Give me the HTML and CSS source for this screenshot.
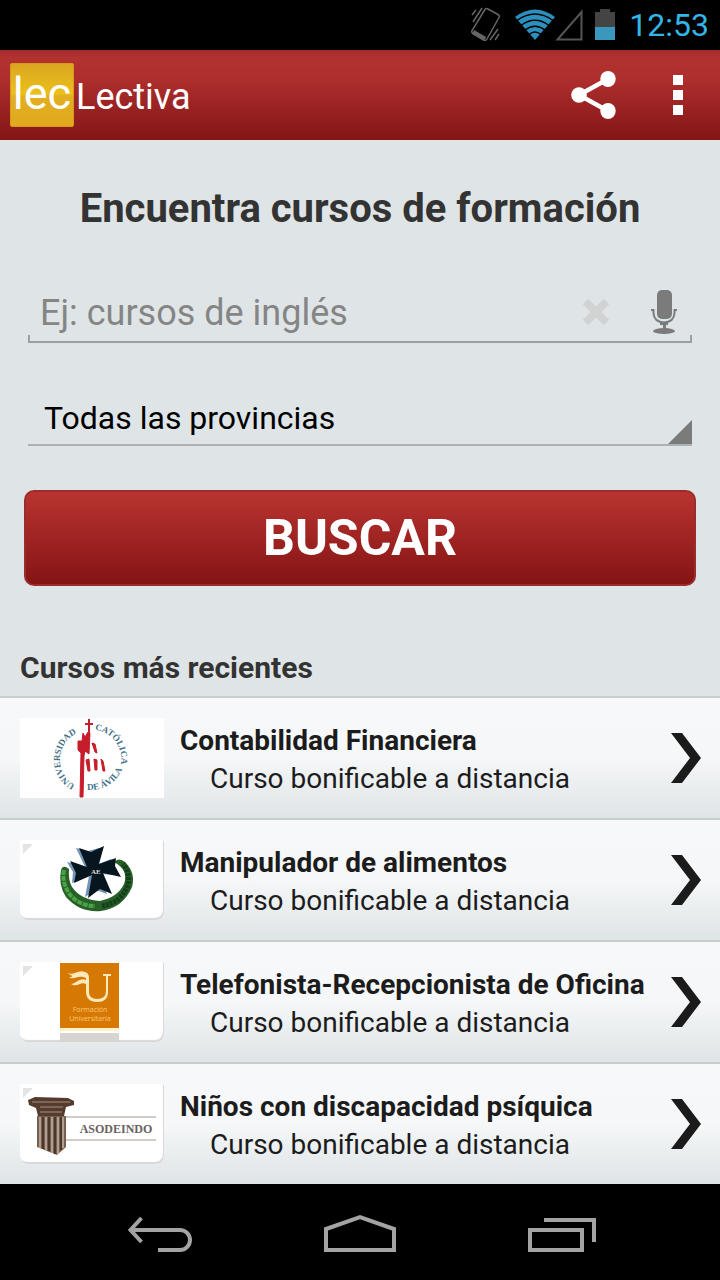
FILE: index.html
```html
<!DOCTYPE html>
<html lang="es">
<head>
<meta charset="utf-8">
<meta name="viewport" content="width=device-width, initial-scale=1">
<title>Lectiva</title>
<link rel="stylesheet" href="styles.css">
</head>
<body>
<div class="status">
  <svg class="status-vibrate" width="30" height="36" viewBox="0 0 30 36" fill="none" stroke="#666" stroke-width="1.5" aria-hidden="true">
    <path d="M14 2.5Q15 1 17 2L27 7.500Q29 8.500 28 10.500L16 32Q15 34 13 33L3 27Q0 26 1 23.500Z"/>
    <path d="M2 25L14 32" stroke-width="4.500"/>
    <path d="M2 15L11 1M1 8L5 3M19 33L27 22M24 33L28 27"/>
  </svg>
  <svg class="status-wifi" width="40" height="32" viewBox="0 0 40 32" aria-hidden="true">
    <path d="M20 31L0 8Q20-7 40 8Z" fill="#2b90bd"/>
    <path d="M2 11.500Q20-1.500 38 11.500M6 16.500Q20 6 34 16.500M10 21Q20 13.500 30 21M14 25.500Q20 20.500 26 25.500" fill="none" stroke="#000" stroke-width="1.500"/>
  </svg>
  <svg class="status-signal" width="28" height="32" viewBox="0 0 28 32" fill="none" stroke="#555" stroke-width="2" aria-hidden="true"><path d="M2.500 30.500H26.500V3Z"/></svg>
  <svg class="status-battery" width="20" height="32" viewBox="0 0 20 32" aria-hidden="true"><path d="M0 3H5V0H15V3H20V31H0Z" fill="#444"/><path d="M0 18H20V31H0Z" fill="#3a98bd"/></svg>
  <time class="clock">12:53</time>
</div>
<header class="appbar">
  <span class="logo" aria-hidden="true">lec</span>
  <span class="app-name">Lectiva</span>
  <button class="bar-button share" type="button" aria-label="Compartir">
    <svg width="46" height="50" viewBox="0 0 46 50" fill="#fff"><path d="M37 9L8 25L37 41" fill="none" stroke="#fff" stroke-width="4.500"/><ellipse cx="37" cy="9" rx="7.700" ry="8"/><circle cx="8" cy="25" r="7.800"/><ellipse cx="37" cy="41" rx="7.700" ry="8"/></svg>
  </button>
  <button class="bar-button more" type="button" aria-label="Más opciones">
    <svg width="10" height="40" viewBox="0 0 10 40" fill="#fff"><path d="M0 0H10V10H0ZM0 15H10V25H0ZM0 30H10V40H0Z"/></svg>
  </button>
</header>
<main>
  <form class="search">
    <h1>Encuentra cursos de formación</h1>
    <div class="field">
      <input class="query" type="text" aria-label="Buscar cursos" placeholder="Ej: cursos de inglés">
      <button class="field-button" type="button" aria-label="Borrar">
        <svg width="28" height="28" viewBox="0 0 28 28" fill="none" stroke="#d1d2d2" stroke-width="8"><path d="M3.500 3.500L24.500 24.500M24.500 3.500L3.500 24.500"/></svg>
      </button>
      <button class="field-button" type="button" aria-label="Buscar por voz">
        <svg width="28" height="46" viewBox="0 0 28 46" fill="#7a7b7a"><rect x="7" y="1" width="15" height="29" rx="5"/><path d="M1 21H3.500V24Q4 33 14 33.500Q24 33 24.500 24V21H27" fill="none" stroke="#7a7b7a" stroke-width="2"/><path d="M10 33H18V36H16V41H13V36H10Z"/><ellipse cx="14" cy="42" rx="11" ry="3"/></svg>
      </button>
    </div>
    <div class="province">
      <select aria-label="Provincia"><option>Todas las provincias</option></select>
      <svg class="corner" width="24" height="24" viewBox="0 0 24 24" aria-hidden="true"><path d="M24 0V24H0Z" fill="#7a7c7b"/></svg>
    </div>
    <button class="submit" type="button">BUSCAR</button>
  </form>
  <section>
    <h2>Cursos más recientes</h2>
    <ul class="courses">
      <li><a class="course" href="#">
        <svg class="thumb plain" viewBox="0 0 144 80" aria-hidden="true">
          <defs>
            <path id="arc-left" d="M55 67A29 29 0 0 1 64 13"/>
            <path id="arc-right" d="M75 12A29 29 0 0 1 99 52"/>
            <path id="arc-bottom" d="M67 72Q96 73 105 44"/>
          </defs>
          <g class="seal"><text><textPath href="#arc-left">UNIVERSIDAD</textPath></text><text><textPath href="#arc-right">CATÓLICA</textPath></text><text><textPath href="#arc-bottom">DE ÁVILA</textPath></text></g>
          <path d="M69 1V16M65 6H73" fill="none" stroke="#c71c2b" stroke-width="2"/>
          <path d="M68 14L70 15L69 36L65 33L64 38L63 79H60L61 35L58 32V23H62L63 15L65 19ZM72 25L75 26L77 35L75 34ZM66 42L69 41L70 53H68ZM74 41L77 42L77 52H75ZM81 41L83 43L85 53H83Z" fill="#c71c2b" stroke="#c71c2b" stroke-width="1"/>
        </svg>
        <span class="course-text"><strong>Contabilidad Financiera</strong><span class="kind">Curso bonificable a distancia</span></span>
        <svg class="chevron" width="32" height="52" viewBox="0 0 32 52" aria-hidden="true"><path d="M1 1H12L31 26L12 51H1L20 26Z" fill="#1b1b1b"/></svg>
      </a></li>
      <li><a class="course" href="#">
        <svg class="thumb" viewBox="0 0 144 80" aria-hidden="true">
          <path d="M3 4H13L3 14Z" fill="#e3e3e3"/>
          <path d="M41 30Q43 24 49 29Q48 40 52 47Q61 60 80 61Q98 57 104 44Q109 30 94 22Q99 17 105 22Q116 33 112 47Q103 68 81 71Q60 73 46 57Q38 45 41 30Z" fill="#276128"/>
          <path d="M44 30Q41 44 52 57Q62 66 75 66" fill="none" stroke="#49a347" stroke-width="4" stroke-dasharray="5 1"/>
          <path d="M82 66Q101 63 108 45Q110 32 103 24" fill="none" stroke="#153e1b" stroke-width="5" stroke-dasharray="3 1"/>
          <path d="M56 8L68 11L79 8L76 25L91 19L95 35L80 34L87 54L76 50L65 57L69 36L52 43L53 32L47 22L65 27Z" fill="#7295b5"/>
          <path d="M59 8L71 12L84 6L79 24L96 18L95 26L101 37L83 33L92 54L80 49L68 58L72 35L54 43L56 33L50 21L67 27Z" fill="#07151f"/>
          <text class="cross-label" x="71" y="34">AE</text>
        </svg>
        <span class="course-text"><strong>Manipulador de alimentos</strong><span class="kind">Curso bonificable a distancia</span></span>
        <svg class="chevron" width="32" height="52" viewBox="0 0 32 52" aria-hidden="true"><path d="M1 1H12L31 26L12 51H1L20 26Z" fill="#1b1b1b"/></svg>
      </a></li>
      <li><a class="course" href="#">
        <svg class="thumb" viewBox="0 0 144 80" aria-hidden="true">
          <path d="M3 4H13L3 14Z" fill="#e3e3e3"/>
          <path d="M40 66H99V69H40Z" fill="#fff0c9"/><path d="M40 71H99V80H40Z" fill="#d8d5d1"/>
          <path d="M40 1H99V66H40Z" fill="#d57904"/>
          <path d="M47 11C54 14 58 7 65 10Q69 11 69 16V30Q69 37 77 37Q86 37 86 29V14H83V12H91V14H88V30Q88 40 77 40Q66 40 66 29V22C61 19 57 26 51 22C57 21 60 15 66 18V16C58 12 54 19 49 15C54 15 53 14 47 11Z" fill="#ffe8b7"/>
          <g class="uni-label"><text x="70" y="50">Formación</text><text x="70" y="59">Universitaria</text></g>
        </svg>
        <span class="course-text"><strong>Telefonista-Recepcionista de Oficina</strong><span class="kind">Curso bonificable a distancia</span></span>
        <svg class="chevron" width="32" height="52" viewBox="0 0 32 52" aria-hidden="true"><path d="M1 1H12L31 26L12 51H1L20 26Z" fill="#1b1b1b"/></svg>
      </a></li>
      <li><a class="course" href="#">
        <svg class="thumb" viewBox="0 0 144 80" aria-hidden="true">
          <path d="M3 4H13L3 14Z" fill="#e3e3e3"/>
          <path d="M45 33H136M45 56H136" stroke="#d3cbc5" stroke-width="2"/>
          <path d="M8 16L15 13L48 14L54 17V21L46 23L44 32H18L16 24L9 21Z" fill="#553b2d"/>
          <path d="M12 18H50M20 23H43M20 28H42" stroke="#7e6657" stroke-width="2"/>
          <path d="M17 32H46V63L37 71L17 63Z" fill="#765e50"/>
          <path d="M20 33V64M26 33V67M32 33V69M38 33V70M43 33V64" stroke="#c6b5a5" stroke-width="1.500"/>
          <path d="M23 33V65M29 33V67M35 33V70M41 33V66" stroke="#3e2a20" stroke-width="1.500"/>
          <text class="column-label" x="96" y="49">ASODEINDO</text>
        </svg>
        <span class="course-text"><strong>Niños con discapacidad psíquica</strong><span class="kind">Curso bonificable a distancia</span></span>
        <svg class="chevron" width="32" height="52" viewBox="0 0 32 52" aria-hidden="true"><path d="M1 1H12L31 26L12 51H1L20 26Z" fill="#1b1b1b"/></svg>
      </a></li>
    </ul>
  </section>
</main>
<nav class="system" aria-label="Sistema">
  <button type="button" aria-label="Atrás"><svg width="72" height="40" viewBox="0 0 72 40" fill="none" stroke="#a3a3a3" stroke-width="4"><path d="M35 36H57A10 10 0 0 0 57 16H8"/><path d="M18.500 4L7.500 16L18.500 28"/></svg></button>
  <button type="button" aria-label="Inicio"><svg width="72" height="40" viewBox="0 0 72 40" fill="none" stroke="#a3a3a3" stroke-width="4"><path d="M2 36V15L36 3L70 15V36Z"/></svg></button>
  <button type="button" aria-label="Aplicaciones recientes"><svg width="72" height="40" viewBox="0 0 72 40" fill="none" stroke="#a3a3a3" stroke-width="4"><path d="M5 16H57V36H5ZM19 6H69V28"/></svg></button>
</nav>
</body>
</html>
```
FILE: styles.css
```css
* { box-sizing: border-box; }
body {
  margin: 0;
  min-height: 100vh;
  display: flex;
  flex-direction: column;
  background: #dfe5e7;
  color: #1c1c1c;
  font-family: Roboto, "Noto Sans", sans-serif;
}
button {
  border: 0;
  padding: 0;
  background: none;
  font-family: inherit;
  color: inherit;
}
svg { display: block; }

.status {
  height: 50px;
  padding: 0 12px;
  display: flex;
  align-items: center;
  justify-content: flex-end;
  background: #000;
}
.status-wifi { margin-left: 13px; }
.status-battery { margin: 0 14px 0 12px; }
.clock {
  color: #33b5e5;
  font-size: 32px;
  line-height: 50px;
  margin-right: -1px;
}
.status-vibrate { margin-right: 1px; }

.appbar {
  height: 90px;
  padding: 0 14px 0 10px;
  display: flex;
  align-items: center;
  background: linear-gradient(#a22c2b, #b3322f 8px, #ad2e2d 30px, #831515);
  color: #fff;
}
.logo {
  width: 64px;
  height: 64px;
  border: 1px solid #d99a1b;
  border-radius: 2px;
  background: linear-gradient(#dba520, #eac01b 48%, #e2af21 52%, #e0a91f);
  font-size: 45px;
  line-height: 60px;
  text-align: center;
}
.app-name {
  flex: 1;
  padding: 4px 0 0 2px;
  font-size: 36px;
}
.bar-button {
  height: 90px;
  display: grid;
  place-items: center;
}
.share { width: 96px; }
.more { width: 56px; margin-left: 8px; }

main { flex: 1; }
.search {
  padding: 45px 24px 0;
  display: flex;
  flex-direction: column;
}
h1, h2 { margin: 0; color: #333; }
h1 {
  font-size: 40px;
  line-height: 48px;
  text-align: center;
}
.field {
  height: 62px;
  margin: 48px 4px 0;
  padding: 0 14px 0 12px;
  display: flex;
  align-items: center;
  gap: 40px;
  background:
    linear-gradient(#9a9f9f, #9a9f9f) left bottom / 2px 8px no-repeat,
    linear-gradient(#9a9f9f, #9a9f9f) right bottom / 2px 8px no-repeat,
    linear-gradient(#9a9f9f, #9a9f9f) left bottom / 100% 2px no-repeat;
}
.query {
  flex: 1;
  min-width: 0;
  padding: 2px 0 0;
  border: 0;
  outline: 0;
  background: none;
  color: #000;
  font: 36px/48px Roboto, "Noto Sans", sans-serif;
}
.query::placeholder { color: #858585; opacity: 1; }
.province {
  height: 56px;
  margin: 47px 4px 0;
  display: flex;
  align-items: flex-end;
  border-bottom: 2px solid #adb1b2;
}
.province select {
  flex: 1;
  height: 54px;
  padding: 2px 16px 0;
  border: 0;
  appearance: none;
  background: none;
  color: #000;
  font: 32px/52px Roboto, "Noto Sans", sans-serif;
}
.submit {
  height: 96px;
  margin-top: 44px;
  border: 2px solid #9b2c2c;
  border-radius: 10px;
  background: linear-gradient(#b93430, #841414);
  color: #fff;
  font-size: 50px;
  font-weight: 700;
}

h2 {
  padding: 64px 20px 10px;
  font-size: 30px;
  line-height: 36px;
}
.courses {
  margin: 0;
  padding: 0;
  list-style: none;
}
.course {
  padding: 20px 18px 20px 20px;
  display: flex;
  align-items: center;
  gap: 16px;
  border-top: 2px solid #c7cccd;
  background: linear-gradient(#f7f8fa, #f5f7f8 50%, #dfe4e6);
  color: inherit;
  text-decoration: none;
}
.thumb {
  width: 144px;
  height: 80px;
  flex: none;
  border-radius: 2px 2px 8px 8px;
  background: #fff;
  box-shadow: inset -1px -2px 1px #d7d7d7;
}
.thumb.plain { border-radius: 0; box-shadow: none; }
.course-text {
  flex: 1;
  padding-top: 4px;
  display: flex;
  flex-direction: column;
  font-size: 28px;
  line-height: 38px;
  white-space: nowrap;
}
.kind { padding-left: 30px; }
.chevron { flex: none; }

.seal { fill: #3f7088; font: bold 9px "Liberation Serif", serif; }
.cross-label { fill: #ddd; font: bold 7px "Liberation Serif", serif; }
.uni-label { fill: #ffc66e; font: 7px "Open Sans", sans-serif; text-anchor: middle; }
.column-label { fill: #68615f; font: bold 12px "Liberation Serif", serif; text-anchor: middle; }

.system {
  height: 96px;
  padding: 4px 58px 0;
  display: flex;
  justify-content: space-between;
  background: #000;
}
.system button {
  flex: 1;
  display: grid;
  place-items: center;
}
```
